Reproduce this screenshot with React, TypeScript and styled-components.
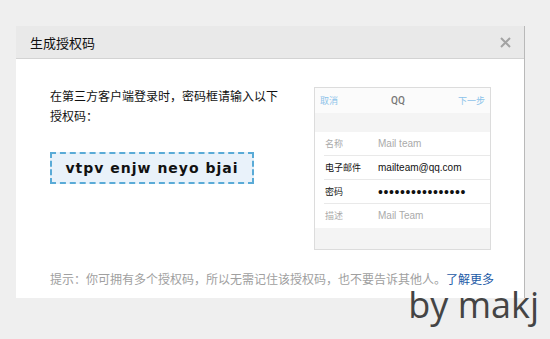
import styled, { createGlobalStyle } from 'styled-components'

const GlobalStyle = createGlobalStyle`
  html, body {
    margin: 0;
    padding: 0;
    background: #efefef;
  }
  body {
    font-family: "Noto Sans CJK SC", sans-serif;
    width: 550px;
    height: 339px;
    overflow: hidden;
    position: relative;
  }
`

type Row = {
  label: string
  value: string
  strong?: boolean
  dots?: boolean
}

const rows: Row[] = [
  { label: '名称', value: 'Mail team' },
  { label: '电子邮件', value: 'mailteam@qq.com', strong: true },
  { label: '密码', value: '••••••••••••••••', strong: true, dots: true },
  { label: '描述', value: 'Mail Team' },
]

function CloseIcon() {
  return (
    <svg width="11" height="11" viewBox="0 0 11 11">
      <path d="M1 1 L10 10 M10 1 L1 10" stroke="#a3a3a3" strokeWidth="2" />
    </svg>
  )
}

export default function App() {
  return (
    <>
      <GlobalStyle />
      <Dialog>
        <Header>
          <Title>生成授权码</Title>
          <CloseButton>
            <CloseIcon />
          </CloseButton>
        </Header>
        <Body>
          <Content>
            <LeftColumn>
              <Intro>在第三方客户端登录时，密码框请输入以下授权码：</Intro>
              <CodeBox>vtpv enjw neyo bjai</CodeBox>
            </LeftColumn>
            <PhoneCard>
              <Nav>
                <NavLink>取消</NavLink>
                <NavTitle>QQ</NavTitle>
                <NavLink>下一步</NavLink>
              </Nav>
              <Band />
              <Rows>
                {rows.map((row, i) => (
                  <FieldRow key={row.label} last={i === rows.length - 1}>
                    <FieldLabel strong={row.strong}>{row.label}</FieldLabel>
                    <FieldValue strong={row.strong} dots={row.dots}>
                      {row.value}
                    </FieldValue>
                  </FieldRow>
                ))}
              </Rows>
              <Filler />
            </PhoneCard>
          </Content>
          <Hint>
            提示：你可拥有多个授权码，所以无需记住该授权码，也不要告诉其他人。
            <MoreLink href="#">了解更多</MoreLink>
          </Hint>
        </Body>
      </Dialog>
      <Watermark>by makj</Watermark>
    </>
  )
}

const Dialog = styled.div`
  margin: 26px 0 0 16px;
  width: 509px;
  height: 272px;
  box-sizing: border-box;
  border-right: 1px solid #b9b9b9;
  background: #fff;
  display: flex;
  flex-direction: column;
`

const Header = styled.div`
  height: 32px;
  background: #e9e9e9;
  border-bottom: 1px solid #d3d3d3;
  display: flex;
  align-items: center;
  justify-content: space-between;
  padding-right: 13px;
`

const Title = styled.div`
  margin-left: 14px;
  font-size: 13px;
  color: #111;
`

const CloseButton = styled.div`
  display: flex;
  align-items: center;
`

const Body = styled.div`
  flex: 1;
  padding: 27px 33px 0 34px;
  display: flex;
  flex-direction: column;
`

const Content = styled.div`
  display: flex;
  justify-content: space-between;
`

const LeftColumn = styled.div`
  width: 235px;
  display: flex;
  flex-direction: column;
  align-items: flex-start;
`

const Intro = styled.div`
  font-size: 12px;
  line-height: 20px;
  color: #111;
`

const CodeBox = styled.div`
  margin-top: 26px;
  width: 204px;
  height: 32px;
  box-sizing: border-box;
  border: 2px dashed #5aabd7;
  background: #e9f2fa;
  display: flex;
  align-items: center;
  justify-content: center;
  font-family: "DejaVu Sans", sans-serif;
  font-weight: bold;
  font-size: 14px;
  letter-spacing: 1px;
  color: #111;
`

const PhoneCard = styled.div`
  margin-top: 1px;
  width: 177px;
  height: 163px;
  box-sizing: border-box;
  border: 1px solid #dcdcdc;
  display: flex;
  flex-direction: column;
  font-size: 9px;
`

const Nav = styled.div`
  height: 25px;
  background: #fbfbfb;
  display: flex;
  align-items: center;
  justify-content: space-between;
  padding: 0 5px 0 5px;
`

const NavLink = styled.span`
  color: #8cc3ea;
`

const NavTitle = styled.span`
  font-family: Roboto, sans-serif;
  font-size: 10px;
  font-weight: 500;
  color: #777;
`

const Band = styled.div`
  height: 19px;
  background: #f4f4f4;
`

const Rows = styled.div`
  padding-left: 9px;
`

const FieldRow = styled.div<{ last?: boolean }>`
  height: 23px;
  display: flex;
  align-items: center;
  border-bottom: 1px solid ${(p) => (p.last ? 'transparent' : '#e9e9e9')};
`

const FieldLabel = styled.span<{ strong?: boolean }>`
  width: 53px;
  padding-left: 1px;
  color: ${(p) => (p.strong ? '#111' : '#aaa')};
`

const FieldValue = styled.span<{ strong?: boolean; dots?: boolean }>`
  font-family: "Liberation Sans", sans-serif;
  font-size: ${(p) => (p.dots ? '14px' : '10px')};
  line-height: 12px;
  color: ${(p) => (p.strong ? '#111' : '#aaa')};
  letter-spacing: ${(p) => (p.dots ? '0.6px' : '0')};
`

const Filler = styled.div`
  flex: 1;
  background: #f4f4f4;
`

const Hint = styled.div`
  margin-top: 20px;
  font-size: 12px;
  line-height: 18px;
  color: #a0a0a0;
  white-space: nowrap;
`

const MoreLink = styled.a`
  color: #1c5aa6;
  text-decoration: none;
`

const Watermark = styled.div`
  position: absolute;
  top: 291px;
  right: 11px;
  font-family: "Open Sans", sans-serif;
  font-size: 36px;
  line-height: 28px;
  color: #444;
`
